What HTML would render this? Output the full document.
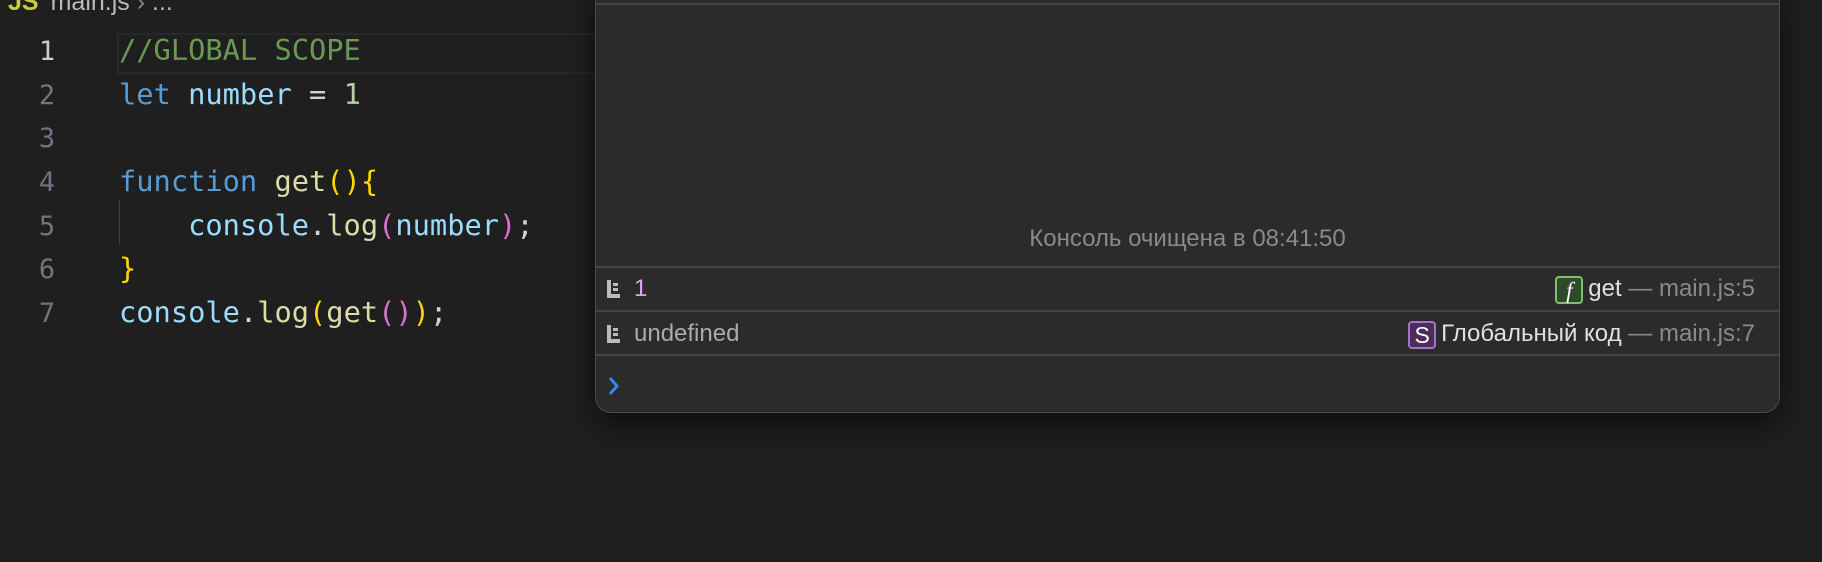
<!DOCTYPE html>
<html><head><meta charset="utf-8"><style>
*{margin:0;padding:0;box-sizing:border-box}
body{width:1822px;height:562px;background:#1f1f1f;position:relative;overflow:hidden;font-family:"Liberation Sans",sans-serif}
.crumb{position:absolute;top:-12px;left:8px;font-size:25px;color:#bbb;white-space:nowrap}
.crumb b{color:#cbcb41;font-weight:bold;margin-right:12px}
.hl{position:absolute;left:117px;top:33px;width:500px;height:41px;border:2px solid #282828}
.ln{position:absolute;left:30px;width:34px;text-align:center;font-family:"DejaVu Sans Mono",monospace;font-size:27px;color:#6e7681}
.code{position:absolute;left:119px;font-family:"DejaVu Sans Mono",monospace;font-size:28.7px;white-space:pre;color:#d4d4d4}
.c{color:#6a9955}.k{color:#569cd6}.v{color:#9cdcfe}.n{color:#b5cea8}.f{color:#dcdcaa}.y{color:#ffd700}.p{color:#da70d6}
.guide{position:absolute;left:119px;top:200px;width:1px;height:44px;background:#404040}
.panel{position:absolute;left:595px;top:-20px;width:1185px;height:433px;background:#2b2b2b;border:1.5px solid #4a4a4a;border-radius:16px;box-shadow:0 12px 30px rgba(0,0,0,.6)}
.topline{position:absolute;left:596px;top:3px;width:1183px;height:2px;background:#444}
.cleared{position:absolute;left:595px;width:1185px;top:225px;text-align:center;color:#8a8a8a;font-size:24px}
.sep{position:absolute;left:596px;width:1183px;height:2px;background:#444}
.row{position:absolute;left:607px;width:1148px;height:30px;font-size:24px;color:#e0e0e0}
.row .ico{position:absolute;left:0;top:7px;width:13px;height:18px}
.row .t{position:absolute;left:27px;top:2px}
.row .r{position:absolute;right:0;top:2px;white-space:nowrap}
.badge{display:inline-block;width:28px;height:28px;border-radius:4px;text-align:center;line-height:25px;color:#fff;vertical-align:-2px;margin-right:5px;font-size:23px}
.g{color:#8a8a8a}
</style></head><body>
<div class="crumb"><b>JS</b>main.js <span style="color:#888">›</span> ...</div>
<div class="hl"></div>
<div class="ln" style="top:36px;color:#ccc">1</div>
<div class="ln" style="top:80px">2</div>
<div class="ln" style="top:123px">3</div>
<div class="ln" style="top:167px">4</div>
<div class="ln" style="top:211px">5</div>
<div class="ln" style="top:254px">6</div>
<div class="ln" style="top:298px">7</div>
<div class="guide"></div>
<div class="code" style="top:33px"><span class="c">//GLOBAL SCOPE</span></div>
<div class="code" style="top:77px"><span class="k">let</span> <span class="v">number</span> = <span class="n">1</span></div>
<div class="code" style="top:164px"><span class="k">function</span> <span class="f">get</span><span class="y">(){</span></div>
<div class="code" style="top:208px">    <span class="v">console</span>.<span class="f">log</span><span class="p">(</span><span class="v">number</span><span class="p">)</span>;</div>
<div class="code" style="top:251px"><span class="y">}</span></div>
<div class="code" style="top:295px"><span class="v">console</span>.<span class="f">log</span><span class="y">(</span><span class="f">get</span><span class="p">()</span><span class="y">)</span>;</div>

<div class="panel"></div>
<div class="topline"></div>
<div class="cleared">Консоль очищена в 08:41:50</div>
<div class="sep" style="top:266px"></div>
<div class="row" style="top:273px">
<svg class="ico" viewBox="0 0 13 18"><rect x="0" y="0" width="4" height="18" fill="#bbb"/><rect x="0" y="14" width="13" height="4" fill="#bbb"/><rect x="6" y="3" width="5" height="3" fill="#bbb"/><rect x="6" y="8" width="5" height="3" fill="#bbb"/></svg>
<span class="t" style="color:#d7a8f0">1</span>
<span class="r"><span class="badge" style="background:#2e4a2a;border:2px solid #7cc26a;font-style:italic;font-family:'Liberation Serif',serif">f</span>get <span class="g">— main.js:5</span></span></div>
<div class="sep" style="top:310px"></div>
<div class="row" style="top:318px">
<svg class="ico" viewBox="0 0 13 18"><rect x="0" y="0" width="4" height="18" fill="#bbb"/><rect x="0" y="14" width="13" height="4" fill="#bbb"/><rect x="6" y="3" width="5" height="3" fill="#bbb"/><rect x="6" y="8" width="5" height="3" fill="#bbb"/></svg>
<span class="t" style="color:#aaa">undefined</span>
<span class="r"><span class="badge" style="background:#4a2d5a;border:2px solid #a276c4">S</span>Глобальный код <span class="g">— main.js:7</span></span></div>
<div class="sep" style="top:354px"></div>
<svg style="position:absolute;left:608px;top:376px" width="12" height="20" viewBox="0 0 12 20"><path d="M2 2 L9 10 L2 18" stroke="#3b82f6" stroke-width="3" fill="none"/></svg>
</body></html>
